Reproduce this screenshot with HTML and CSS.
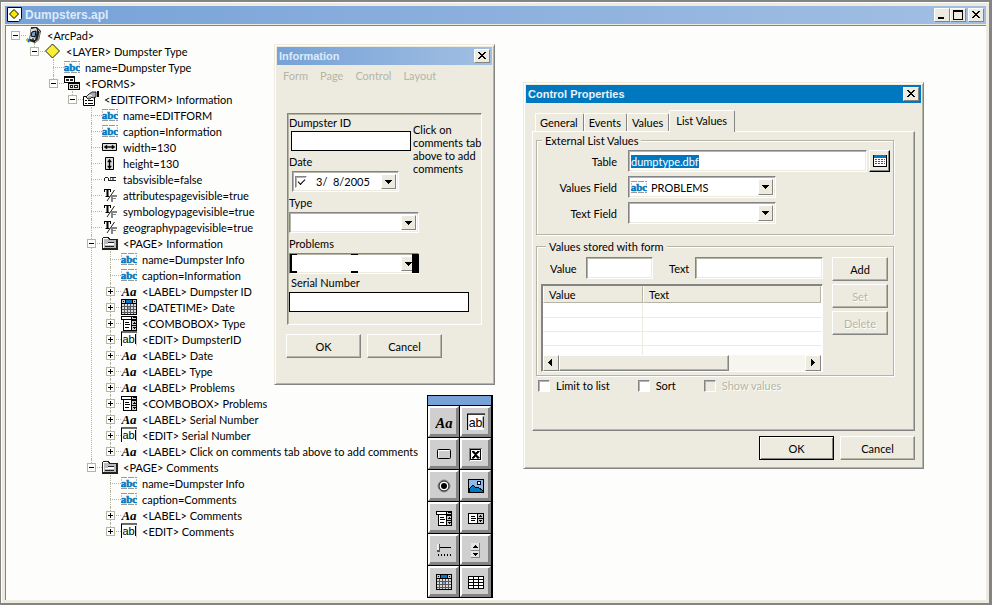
FILE: index.html
```
<!DOCTYPE html>
<html lang="en">
<head>
    <meta charset="UTF-8">
    <meta name="viewport" content="width=device-width, initial-scale=1.0">
    <title>Dumpsters.apl</title>
    <link rel="stylesheet" href="styles.css">
</head>
<body>
    <!-- icon set -->
    <svg class="sprite" aria-hidden="true">
        <symbol id="i-abc" viewBox="0 0 16 16">
            <path d="M0 2.500h16M0 13.500h16" stroke="#999" stroke-dasharray="6 1"/>
            <path d="M0 5h1M15 5h1M0 11h1" stroke="#848484"/>
            <text x="8" y="12" text-anchor="middle" font-family="Liberation Serif, serif" font-weight="bold" font-size="11" fill="#0078bf" stroke="#0078bf" stroke-width=".5">abc</text>
        </symbol>
        <symbol id="i-arcpad" viewBox="0 0 16 16">
            <path d="M5 0h6l4 4-2 9-4 3-6-2z" fill="#222"/>
            <path d="M5 2l5-1 1 2-2 10-5-1z" fill="#ddd"/>
            <path d="M6 5l4-1-1 6-4-1z" fill="#7ba2d8" stroke="#000"/>
            <path d="M12 3l2 2-2 8-3 2" fill="none" stroke="#aaa"/>
            <path d="M6 12h2" stroke="#000"/>
            <path d="M1 11l3 2-1 3-2-2z" fill="#0078bf"/>
            <path d="M0 12h2v2H0z" fill="#d9c000"/>
        </symbol>
        <symbol id="i-layer" viewBox="0 0 16 16">
            <path d="M7.500 1l7 7-7 7-7-7z" fill="#f8f032" stroke="#222"/>
        </symbol>
        <symbol id="i-forms" viewBox="0 0 16 16" shape-rendering="crispEdges">
            <path d="M0 1h11v7H0z"/><path d="M1 3h9v4H1z" fill="#fff"/>
            <path d="M2 4h3v2H2zM6 4h3v2H6z" fill="#222"/>
            <path d="M4 7h12v8H4z"/><path d="M5 9h10v5H5z" fill="#ddd"/>
            <path d="M6 10h3v3H6zM10 10h4v3h-4z" fill="#222"/>
            <path d="M7 11h1v1H7zM11 11h2v1h-2z" fill="#fff"/>
        </symbol>
        <symbol id="i-editform" viewBox="0 0 16 16">
            <path d="M.5 5.500h11v9H.5z" fill="#fff" stroke="#000"/>
            <path d="M2 9.500h2M5 9.500h5M2 12.500h2M5 12.500h5" stroke="#000"/>
            <path d="M3 6l3-3 3-2h4v5l-3 1-1-1-2 2H5z" fill="#aaa" stroke="#000" stroke-width=".8"/>
            <path d="M4 6l3-2 2 1" fill="none" stroke="#fff"/>
            <path d="M14 0h2v6h-2z"/>
        </symbol>
        <symbol id="i-width" viewBox="0 0 16 16">
            <path d="M.5 4.500h14v7H.5z" fill="#ddd" stroke="#000"/>
            <path d="M2 8l3-2v1.500h5V6l3 2-3 2V8.500H5V10z" stroke="#000" stroke-width=".4"/>
        </symbol>
        <symbol id="i-height" viewBox="0 0 16 16">
            <path d="M3.500 2.500h8v12h-8z" fill="#ddd" stroke="#000"/>
            <path d="M7.500 4l2 3H8v4h1.500l-2 3-2-3H7V7H5.500z" stroke="#000" stroke-width=".4"/>
        </symbol>
        <symbol id="i-tabs" viewBox="0 0 16 16" shape-rendering="crispEdges">
            <path d="M2 7h1v3H2zM3 6h3v1H3zM6 7h1v3H6zM8 6h5v1H8zM7 9h6v1H7z" fill="#222"/>
            <path d="M8 7h1v2H8zM10 7h2v2h-2z" fill="#848484"/>
            <path d="M13 6h1v1h-1zM13 9h1v1h-1z" fill="#222"/>
        </symbol>
        <symbol id="i-tf" viewBox="0 0 16 16">
            <path d="M2 2h7v3H8V3H6.500v6h1v1h-4V9h1V3H3v2H2z"/>
            <path d="M12.500 3L5 14" stroke="#222"/>
            <path d="M9 8h6v2h-4v1h3v1h-3v3H9z" fill="#848484"/>
        </symbol>
        <symbol id="i-page" viewBox="0 0 16 16" shape-rendering="crispEdges">
            <path d="M1 2h6l1 2h8v11H0V3z" fill="#222"/>
            <path d="M1 3h5l1 2h7v8H1z" fill="#bbb"/>
            <path d="M1 3h5v1H1zM1 4h1v9H1z" fill="#fff"/>
            <path d="M6 7h6v1H6zM3 11h9v1H3z" fill="#222"/>
            <path d="M6 8h6v1H6zM3 9h9v1H3z" fill="#fff"/>
        </symbol>
        <symbol id="i-label" viewBox="0 0 16 16">
            <text x="8" y="13" text-anchor="middle" font-family="Liberation Serif, serif" font-weight="bold" font-style="italic" font-size="13">Aa</text>
        </symbol>
        <symbol id="i-date" viewBox="0 0 16 16" shape-rendering="crispEdges">
            <path d="M0 0h16v16H0z"/>
            <path d="M1 1h3v3H1zM12 1h3v3h-3z" fill="#ccc"/>
            <path d="M5 1h6v3H5z" fill="#0078bf"/>
            <path d="M2 2h1v1H2zM13 2h1v1h-1z"/>
            <path d="M1 5h14v10H1z" fill="#ddd"/>
            <path d="M3 5h1v10H3zM6 5h1v10H6zM9 5h1v10H9zM12 5h1v10h-1z" fill="#555"/>
            <path d="M1 7h14v1H1zM1 10h14v1H1zM1 13h14v1H1z" fill="#555"/>
            <path d="M7 8h2v2H7z" fill="#7ba2d8"/>
        </symbol>
        <symbol id="i-combo" viewBox="0 0 16 16" shape-rendering="crispEdges">
            <path d="M0 1h16v4H0zM2 5h14v11H2z"/>
            <path d="M1 2h9v2H1zM3 5h7v10H3z" fill="#fff"/>
            <path d="M11 2h4v2h-4zM11 6h4v4h-4zM11 11h4v4h-4z" fill="#ccc"/>
            <path d="M4 7h4v1H4zM4 9h5v1H4zM4 12h4v1H4zM12 2h3v1h-3zM12 8h3v1h-3zM13 7h1v1h-1zM12 12h3v1h-3zM13 13h1v1h-1z"/>
        </symbol>
        <symbol id="i-edit" viewBox="0 0 16 16">
            <path d="M0 0h16v15H0z" fill="#ccc"/>
            <path d="M1 1.500h14V15H1z" fill="#fff"/>
            <path d="M0 1h16M.5 1v14" stroke="#000" fill="none"/>
            <text x="1.500" y="12" font-family="Liberation Sans, sans-serif" font-size="11">ab</text>
            <path d="M14.500 3v10" stroke="#000"/>
        </symbol>
        <symbol id="i-button" viewBox="0 0 16 16">
            <rect x="1.500" y="3.500" width="13" height="9" rx="1" fill="#ccc" stroke="#000"/>
            <path d="M2.500 11.500V4.500h11" stroke="#fff" fill="none"/>
        </symbol>
        <symbol id="i-check" viewBox="0 0 16 16" shape-rendering="crispEdges">
            <path d="M1 2h13v13H1z" fill="#fff"/><path d="M1 2h13v1H2v12H1z" fill="#848484"/>
            <path d="M2 3h11v11H2z"/><path d="M3 4h9v9H3z" fill="#fff"/>
            <path d="M4 5h2v1h1v1h1V6h1V5h2v1h-1v1H9v1H8v1h1v1h1v1h1v1H9v-1H8v-1H7v1H6v1H4v-1h1v-1h1V9h1V8H6V7H5V6H4z" stroke="#000" stroke-width=".6"/>
        </symbol>
        <symbol id="i-radio" viewBox="0 0 16 16">
            <circle cx="8" cy="8" r="6" fill="#fff" stroke="#848484"/>
            <circle cx="8" cy="8" r="5" fill="#fff" stroke="#000"/>
            <circle cx="8" cy="8" r="3"/>
        </symbol>
        <symbol id="i-image" viewBox="0 0 16 16" shape-rendering="crispEdges">
            <path d="M.5 1.500h15v13H.5z" fill="#8fb8ea" stroke="#000"/>
            <path d="M1 14v-3l4-4 3 3 2-1 5 4v1z" fill="#0078bf" stroke="#000"/>
            <circle cx="11" cy="5" r="2" fill="#fff" stroke="#000"/>
        </symbol>
        <symbol id="i-list" viewBox="0 0 16 16" shape-rendering="crispEdges">
            <path d="M0 3h16v11H0z"/><path d="M1 4h8v9H1z" fill="#fff"/>
            <path d="M10 4h5v4h-5zM10 9h5v4h-5z" fill="#ccc"/>
            <path d="M3 6h4v1H3zM3 8h5v1H3zM3 10h4v1H3zM12 5h1v1h-1zM11 6h3v1h-3zM11 10h3v1h-3zM12 11h1v1h-1z"/>
        </symbol>
        <symbol id="i-slider" viewBox="0 0 16 16" shape-rendering="crispEdges">
            <path d="M4 5h11v1H4zM3 8h1v2H3z"/>
            <path d="M1 2h3v8H1z" fill="#555"/><path d="M1 2h2v6H1z" fill="#eee"/>
            <path d="M2 12h1v2H2zM5 12h1v2H5zM8 12h1v2H8zM11 12h1v2h-1zM14 12h1v2h-1z"/>
        </symbol>
        <symbol id="i-spin" viewBox="0 0 16 16" shape-rendering="crispEdges">
            <path d="M3 1h9v15H3z" fill="#848484"/>
            <path d="M3 1h8v7H3zM3 9h8v6H3z" fill="#e4e4e4"/>
            <path d="M7 3h1v1H7zM6 4h3v1H6zM5 5h5v1H5zM5 11h5v1H5zM6 12h3v1H6zM7 13h1v1H7z"/>
        </symbol>
        <symbol id="i-table" viewBox="0 0 16 16" shape-rendering="crispEdges">
            <path d="M0 2h16v13H0z"/>
            <path d="M1 3h4v2H1zM6 3h4v2H6zM11 3h4v2h-4zM1 6h4v2H1zM6 6h4v2H6zM11 6h4v2h-4zM1 9h4v2H1zM6 9h4v2H6zM11 9h4v2h-4zM1 12h4v2H1zM6 12h4v2H6zM11 12h4v2h-4z" fill="#fff"/>
        </symbol>
        <symbol id="i-browse" viewBox="0 0 16 16" shape-rendering="crispEdges">
            <path d="M1 2h14v12H1z"/><path d="M2 2h12v3H2z" fill="#0078bf"/>
            <path d="M2 5h12v8H2z" fill="#fff"/>
            <path d="M3 6h2v1H3zM6 6h2v1H6zM9 6h2v1H9zM12 6h1v1h-1zM3 8h2v1H3zM6 8h2v1H6zM9 8h2v1H9zM12 8h1v1h-1zM3 10h2v1H3zM6 10h2v1H6zM9 10h2v1H9zM12 10h1v1h-1z" fill="#555"/>
        </symbol>
        <symbol id="i-app" viewBox="0 0 16 16">
            <path d="M.5 .5h14v11l-3 3H.5z" fill="#fff" stroke="#000"/>
            <path d="M7 2.500l4.500 4.500L7 11.500 2.500 7z" fill="#f8e800" stroke="#000"/>
            <path d="M12 15v-3h3z" fill="#0078bf"/>
        </symbol>
        <symbol id="i-close" viewBox="0 0 10 10" shape-rendering="crispEdges">
            <path d="M1 1h2v1h1v1h2V2h1V1h2v1H8v1H7v1H6v1h1v1h1v1h1v1H7V7H6V6H4v1H3v1H1V7h1V6h1V5h1V4H3V3H2V2H1z"/>
        </symbol>
        <symbol id="i-min" viewBox="0 0 10 10"><path d="M1 7h6v2H1z"/></symbol>
        <symbol id="i-max" viewBox="0 0 10 10"><path d="M0 0h10v10H0z M1 2v7h8V2z" fill-rule="evenodd"/></symbol>
        <symbol id="i-down" viewBox="0 0 8 8" shape-rendering="crispEdges"><path d="M0 2h7v1H0zM1 3h5v1H1zM2 4h3v1H2zM3 5h1v1H3z"/></symbol>
        <symbol id="i-left" viewBox="0 0 8 8" shape-rendering="crispEdges"><path d="M5 0v7H4V6H3V5H2V4H1V3h1V2h1V1h1V0z"/></symbol>
        <symbol id="i-right" viewBox="0 0 8 8" shape-rendering="crispEdges"><path d="M2 0v7h1V6h1V5h1V4h1V3H5V2H4V1H3V0z"/></symbol>
    </svg>

    <main class="window">
        <header class="title-bar">
            <svg class="icon"><use href="#i-app"/></svg>
            <h1>Dumpsters.apl</h1>
            <div class="window-buttons">
                <button class="cap" aria-label="Minimize"><svg><use href="#i-min"/></svg></button>
                <button class="cap" aria-label="Maximize"><svg><use href="#i-max"/></svg></button>
                <button class="cap cap-close" aria-label="Close"><svg><use href="#i-close"/></svg></button>
            </div>
        </header>

        <div class="client">
            <ul class="tree">
                <li>
                    <div class="row"><button class="toggle open" aria-label="Collapse"></button><svg class="icon"><use href="#i-arcpad"/></svg>&lt;ArcPad&gt;</div>
                    <ul>
                        <li>
                            <div class="row"><button class="toggle open" aria-label="Collapse"></button><svg class="icon"><use href="#i-layer"/></svg>&lt;LAYER&gt; Dumpster Type</div>
                            <ul>
                                <li><div class="row"><svg class="icon"><use href="#i-abc"/></svg>name=Dumpster Type</div></li>
                                <li>
                                    <div class="row"><button class="toggle open" aria-label="Collapse"></button><svg class="icon"><use href="#i-forms"/></svg>&lt;FORMS&gt;</div>
                                    <ul>
                                        <li>
                                            <div class="row"><button class="toggle open" aria-label="Collapse"></button><svg class="icon"><use href="#i-editform"/></svg>&lt;EDITFORM&gt; Information</div>
                                            <ul>
                                                <li><div class="row"><svg class="icon"><use href="#i-abc"/></svg>name=EDITFORM</div></li>
                                                <li><div class="row"><svg class="icon"><use href="#i-abc"/></svg>caption=Information</div></li>
                                                <li><div class="row"><svg class="icon"><use href="#i-width"/></svg>width=130</div></li>
                                                <li><div class="row"><svg class="icon"><use href="#i-height"/></svg>height=130</div></li>
                                                <li><div class="row"><svg class="icon"><use href="#i-tabs"/></svg>tabsvisible=false</div></li>
                                                <li><div class="row"><svg class="icon"><use href="#i-tf"/></svg>attributespagevisible=true</div></li>
                                                <li><div class="row"><svg class="icon"><use href="#i-tf"/></svg>symbologypagevisible=true</div></li>
                                                <li><div class="row"><svg class="icon"><use href="#i-tf"/></svg>geographypagevisible=true</div></li>
                                                <li>
                                                    <div class="row"><button class="toggle open" aria-label="Collapse"></button><svg class="icon"><use href="#i-page"/></svg>&lt;PAGE&gt; Information</div>
                                                    <ul>
                                                        <li><div class="row"><svg class="icon"><use href="#i-abc"/></svg>name=Dumpster Info</div></li>
                                                        <li><div class="row"><svg class="icon"><use href="#i-abc"/></svg>caption=Information</div></li>
                                                        <li><div class="row"><button class="toggle" aria-label="Expand"></button><svg class="icon"><use href="#i-label"/></svg>&lt;LABEL&gt; Dumpster ID</div></li>
                                                        <li><div class="row"><button class="toggle" aria-label="Expand"></button><svg class="icon"><use href="#i-date"/></svg>&lt;DATETIME&gt; Date</div></li>
                                                        <li><div class="row"><button class="toggle" aria-label="Expand"></button><svg class="icon"><use href="#i-combo"/></svg>&lt;COMBOBOX&gt; Type</div></li>
                                                        <li><div class="row"><button class="toggle" aria-label="Expand"></button><svg class="icon"><use href="#i-edit"/></svg>&lt;EDIT&gt; DumpsterID</div></li>
                                                        <li><div class="row"><button class="toggle" aria-label="Expand"></button><svg class="icon"><use href="#i-label"/></svg>&lt;LABEL&gt; Date</div></li>
                                                        <li><div class="row"><button class="toggle" aria-label="Expand"></button><svg class="icon"><use href="#i-label"/></svg>&lt;LABEL&gt; Type</div></li>
                                                        <li><div class="row"><button class="toggle" aria-label="Expand"></button><svg class="icon"><use href="#i-label"/></svg>&lt;LABEL&gt; Problems</div></li>
                                                        <li><div class="row"><button class="toggle" aria-label="Expand"></button><svg class="icon"><use href="#i-combo"/></svg>&lt;COMBOBOX&gt; Problems</div></li>
                                                        <li><div class="row"><button class="toggle" aria-label="Expand"></button><svg class="icon"><use href="#i-label"/></svg>&lt;LABEL&gt; Serial Number</div></li>
                                                        <li><div class="row"><button class="toggle" aria-label="Expand"></button><svg class="icon"><use href="#i-edit"/></svg>&lt;EDIT&gt; Serial Number</div></li>
                                                        <li><div class="row"><button class="toggle" aria-label="Expand"></button><svg class="icon"><use href="#i-label"/></svg>&lt;LABEL&gt; Click on comments tab above to add comments</div></li>
                                                    </ul>
                                                </li>
                                                <li>
                                                    <div class="row"><button class="toggle open" aria-label="Collapse"></button><svg class="icon"><use href="#i-page"/></svg>&lt;PAGE&gt; Comments</div>
                                                    <ul>
                                                        <li><div class="row"><svg class="icon"><use href="#i-abc"/></svg>name=Dumpster Info</div></li>
                                                        <li><div class="row"><svg class="icon"><use href="#i-abc"/></svg>caption=Comments</div></li>
                                                        <li><div class="row"><button class="toggle" aria-label="Expand"></button><svg class="icon"><use href="#i-label"/></svg>&lt;LABEL&gt; Comments</div></li>
                                                        <li><div class="row"><button class="toggle" aria-label="Expand"></button><svg class="icon"><use href="#i-edit"/></svg>&lt;EDIT&gt; Comments</div></li>
                                                    </ul>
                                                </li>
                                            </ul>
                                        </li>
                                    </ul>
                                </li>
                            </ul>
                        </li>
                    </ul>
                </li>
            </ul>
        </div>
    </main>

    <!-- form preview -->
    <section class="dialog info-dialog">
        <header class="dialog-title inactive">
            <h2>Information</h2>
            <button class="cap" aria-label="Close"><svg><use href="#i-close"/></svg></button>
        </header>
        <nav class="menu">
            <button disabled>Form</button>
            <button disabled>Page</button>
            <button disabled>Control</button>
            <button disabled>Layout</button>
        </nav>
        <div class="form-page">
            <div class="form-top">
                <div class="form-fields">
                    <label for="dumpsterId">Dumpster ID</label>
                    <input type="text" class="flat" id="dumpsterId">
                    <label for="date">Date</label>
                    <div class="combo date-picker">
                        <input type="checkbox" checked aria-label="Use date">
                        <input type="text" id="date" value="3/  8/2005">
                        <button class="drop" aria-label="Open calendar"><svg><use href="#i-down"/></svg></button>
                    </div>
                    <label for="type">Type</label>
                    <div class="combo">
                        <select id="type"><option></option></select>
                        <span class="drop"><svg><use href="#i-down"/></svg></span>
                    </div>
                    <label for="problems">Problems</label>
                    <div class="combo selected">
                        <select id="problems"><option></option></select>
                        <span class="drop"><svg><use href="#i-down"/></svg></span>
                        <i class="handle left"></i>
                        <i class="handle middle"></i>
                        <i class="handle right"></i>
                    </div>
                </div>
                <p class="note">Click on comments tab above to add comments</p>
            </div>
            <label class="serial-label" for="serial">Serial Number</label>
            <input type="text" class="flat serial" id="serial">
        </div>
        <div class="buttons">
            <button class="btn">OK</button>
            <button class="btn">Cancel</button>
        </div>
    </section>

    <!-- control toolbox -->
    <section class="toolbox" aria-label="Toolbox">
        <div class="toolbox-title"></div>
        <button class="tool" aria-label="Label"><svg class="medium"><use href="#i-label"/></svg></button>
        <button class="tool" aria-label="Edit"><svg class="medium"><use href="#i-edit"/></svg></button>
        <button class="tool" aria-label="Button"><svg><use href="#i-button"/></svg></button>
        <button class="tool" aria-label="Check box"><svg><use href="#i-check"/></svg></button>
        <button class="tool" aria-label="Radio button"><svg><use href="#i-radio"/></svg></button>
        <button class="tool" aria-label="Image"><svg><use href="#i-image"/></svg></button>
        <button class="tool" aria-label="Combo box"><svg><use href="#i-combo"/></svg></button>
        <button class="tool" aria-label="List box"><svg><use href="#i-list"/></svg></button>
        <button class="tool" aria-label="Slider"><svg><use href="#i-slider"/></svg></button>
        <button class="tool" aria-label="Up down"><svg><use href="#i-spin"/></svg></button>
        <button class="tool" aria-label="Date time"><svg><use href="#i-date"/></svg></button>
        <button class="tool" aria-label="Table"><svg><use href="#i-table"/></svg></button>
    </section>

    <!-- control properties -->
    <section class="dialog props-dialog">
        <header class="dialog-title">
            <h2>Control Properties</h2>
            <button class="cap" aria-label="Close"><svg><use href="#i-close"/></svg></button>
        </header>
        <div class="tabs" role="tablist">
            <button class="tab" role="tab">General</button>
            <button class="tab" role="tab">Events</button>
            <button class="tab" role="tab">Values</button>
            <button class="tab active" role="tab" aria-selected="true">List Values</button>
        </div>
        <div class="tab-panel">
            <fieldset>
                <legend>External List Values</legend>
                <div class="external">
                    <label for="table">Table</label>
                    <div class="table-field">
                        <div class="sunken"><input type="text" id="table" value="dumptype.dbf"></div>
                        <button class="browse" aria-label="Browse"><svg><use href="#i-browse"/></svg></button>
                    </div>
                    <label for="valuesField">Values Field</label>
                    <div class="combo">
                        <svg class="icon"><use href="#i-abc"/></svg>
                        <select id="valuesField"><option>PROBLEMS</option></select>
                        <span class="drop"><svg><use href="#i-down"/></svg></span>
                    </div>
                    <label for="textField">Text Field</label>
                    <div class="combo">
                        <select id="textField"><option></option></select>
                        <span class="drop"><svg><use href="#i-down"/></svg></span>
                    </div>
                </div>
            </fieldset>
            <fieldset>
                <legend>Values stored with form</legend>
                <div class="stored">
                    <div class="stored-main">
                        <div class="stored-inputs">
                            <label for="value">Value</label>
                            <div class="sunken value-input"><input type="text" id="value"></div>
                            <label for="text">Text</label>
                            <div class="sunken"><input type="text" id="text"></div>
                        </div>
                        <div class="list">
                            <table>
                                <thead><tr><th>Value</th><th>Text</th></tr></thead>
                                <tbody>
                                    <tr><td></td><td></td></tr>
                                    <tr><td></td><td></td></tr>
                                    <tr><td></td><td></td></tr>
                                    <tr><td></td><td></td></tr>
                                </tbody>
                            </table>
                            <div class="scrollbar">
                                <button class="arrow" aria-label="Scroll left"><svg><use href="#i-left"/></svg></button>
                                <div class="thumb"></div>
                                <button class="arrow" aria-label="Scroll right"><svg><use href="#i-right"/></svg></button>
                            </div>
                        </div>
                    </div>
                    <div class="stored-buttons">
                        <button class="btn">Add</button>
                        <button class="btn" disabled>Set</button>
                        <button class="btn" disabled>Delete</button>
                    </div>
                </div>
            </fieldset>
            <div class="options">
                <label><input type="checkbox">Limit to list</label>
                <label><input type="checkbox">Sort</label>
                <label class="disabled"><input type="checkbox" disabled>Show values</label>
            </div>
        </div>
        <div class="buttons">
            <button class="btn default">OK</button>
            <button class="btn">Cancel</button>
        </div>
    </section>

    <script>
        // the table name starts out selected
        document.getElementById("table").select();
    </script>
</body>
</html>
```
FILE: styles.css
```
* {
    box-sizing: border-box;
}
body {
    margin: 0;
    background: #fdfdfb;
    color: #000;
    font-family: Lato, "Liberation Sans", sans-serif;
    font-size: 11px;
    line-height: 13px;
}
button, input, select {
    font: inherit;
    color: inherit;
    margin: 0;
    padding: 0;
    border: none;
    border-radius: 0;
    outline: none;
}
h1, h2, p {
    margin: 0;
    font-size: 11px;
}
h1, h2 {
    font-family: "Liberation Sans", Arial, sans-serif;
}
ul {
    list-style: none;
    margin: 0;
    padding: 0;
}
.sprite {
    display: none;
}
.icon {
    width: 16px;
    height: 16px;
    flex: none;
}

/* main window */
.window {
    display: flex;
    flex-direction: column;
    min-height: 100vh;
    border: 2px solid #848484;
    border-left-width: 1px;
    border-right-width: 3px;
    background: #edebe0;
    padding: 4px 3px 3px 4px;
    box-shadow: inset 1px 1px 0 #fff;
}
.title-bar {
    display: flex;
    align-items: center;
    height: 18px;
    padding: 0 2px;
    background: linear-gradient(90deg, #76a2d8, #a2bfe3);
    color: #dceafa;
}
.title-bar h1 {
    flex: 1;
    font-size: 12px;
    padding-left: 2px;
}
.window-buttons {
    display: flex;
}
.cap {
    display: flex;
    align-items: center;
    justify-content: center;
    width: 16px;
    height: 14px;
    background: #edebe0;
    border: 1px solid;
    border-color: #fff #848484 #848484 #fff;
    color: #000;
}
.cap svg {
    width: 10px;
    height: 10px;
}
.cap-close {
    margin-left: 2px;
}
.client {
    flex: 1;
    margin-top: 1px;
    padding: 1px 0 0 5px;
    background: #fdfdfb;
    border: 1px solid #848484;
    border-width: 1px 0 0 1px;
}

/* tree */
.tree ul {
    padding-left: 19px;
}
.tree li {
    position: relative;
}
.tree li::before {
    content: "";
    position: absolute;
    left: 4px;
    top: 0;
    bottom: 0;
    border-left: 1px dotted #b5b5a5;
}
.tree li:last-child::before {
    bottom: auto;
    height: 8px;
}
.tree > li::before {
    display: none;
}
.row {
    position: relative;
    display: flex;
    align-items: center;
    height: 16px;
    white-space: nowrap;
}
.row::before {
    content: "";
    position: absolute;
    left: 4px;
    top: 8px;
    width: 11px;
    border-top: 1px dotted #b5b5a5;
}
.row .icon {
    margin: 0 5px 0 15px;
}
.toggle {
    position: relative;
    width: 9px;
    height: 9px;
    border: 1px solid #b5b5a5;
    background:
        linear-gradient(#000, #000) center / 5px 1px no-repeat,
        linear-gradient(#000, #000) center / 1px 5px no-repeat,
        #fff;
}
.toggle.open {
    background: linear-gradient(#000, #000) center / 5px 1px no-repeat, #fff;
}
.toggle + .icon {
    margin-left: 6px;
}

/* dialogs */
.dialog {
    position: absolute;
    background: #edebe0;
    border: 1px solid;
    border-color: #edebe0 #848484 #848484 #edebe0;
    box-shadow: inset 1px 1px 0 #fff, inset -1px -1px 0 #b5b5a5;
    padding: 2px;
}
.info-dialog {
    left: 274px;
    top: 44px;
    width: 221px;
}
.props-dialog {
    left: 523px;
    top: 82px;
    width: 401px;
}
.dialog-title {
    display: flex;
    align-items: center;
    justify-content: space-between;
    height: 18px;
    padding: 0 2px;
    background: #0078bf;
    color: #e8f2fa;
}
.dialog-title.inactive {
    background: linear-gradient(90deg, #76a2d8, #a2bfe3);
    color: #dceafa;
}
.menu {
    display: flex;
    gap: 12px;
    padding: 4px 6px;
}
.menu button {
    background: none;
    color: #b5b5a5;
}
.form-page {
    margin: 27px 10px 0;
    height: 212px;
    border: 1px solid;
    border-color: #848484 #fff #fff #848484;
    box-shadow: inset 1px 1px 0 #b5b5a5;
    padding: 2px 0 0 1px;
}
.form-top {
    display: flex;
}
.form-fields {
    display: flex;
    flex-direction: column;
    flex: none;
    width: 130px;
}
.form-fields label {
    padding: 0 0 3px;
    margin-top: 4px;
}
.form-fields label:first-child {
    margin-top: 0;
    padding-bottom: 2px;
}
.flat {
    height: 20px;
    background: #fff;
    border: 1px solid #000;
}
.form-fields .flat {
    width: 120px;
    margin-left: 2px;
}
.note {
    flex: none;
    width: 72px;
    margin: 7px 0 0 -6px;
    font-weight: normal;
}
.serial-label {
    display: block;
    margin: 2px 0 3px 2px;
}
.serial {
    display: block;
    width: 180px;
}

/* fields */
.sunken, .combo {
    display: flex;
    align-items: center;
    height: 22px;
    background: #fff;
    border: 1px solid;
    border-color: #848484 #fff #fff #848484;
    box-shadow: inset 1px 1px 0 #b5b5a5, inset -1px -1px 0 #edebe0;
    padding: 2px;
}
.sunken input {
    width: 100%;
    min-width: 0;
    background: none;
}
.sunken input::selection {
    background: #0078bf;
    color: #fff;
}
.form-fields .combo {
    height: 21px;
}
.combo select {
    flex: 1;
    min-width: 0;
    height: 100%;
    appearance: none;
    background: none;
    padding-left: 4px;
}
.drop {
    display: flex;
    align-items: center;
    justify-content: center;
    width: 15px;
    height: 100%;
    background: #edebe0;
    border: 1px solid;
    border-color: #fff #848484 #848484 #fff;
}
.drop svg, .arrow svg {
    width: 8px;
    height: 8px;
}
.date-picker {
    width: 107px;
    margin-left: 3px;
    white-space: pre;
}
.date-picker input[type="text"] {
    flex: 1;
    min-width: 0;
    background: none;
    padding-left: 9px;
}
input[type="checkbox"] {
    appearance: none;
    flex: none;
    display: grid;
    place-content: center;
    width: 12px;
    height: 12px;
    background: #fff;
    border: 1px solid;
    border-color: #848484 #fff #fff #848484;
    box-shadow: inset 1px 1px 0 #b5b5a5;
}
input[type="checkbox"]:checked::before {
    content: "";
    width: 6px;
    height: 3px;
    border: solid #000;
    border-width: 0 0 1px 1px;
    transform: rotate(-45deg);
    margin-bottom: 2px;
}
input[type="checkbox"]:disabled {
    background: #edebe0;
}

/* selection handles over the control being edited */
.selected {
    position: relative;
}
.handle {
    position: absolute;
    top: 0;
    bottom: 0;
    border: solid #000;
    border-width: 0;
}
/* left and middle are drawn as corner marks, the bars only touch the edges */
.handle.left {
    left: 0;
    width: 7px;
    border-width: 1px 0 2px 2px;
}
.handle.middle {
    left: 61px;
    width: 7px;
    border-width: 1px 0 2px;
}
.handle.right {
    right: -1px;
    width: 7px;
    background: #000;
}

/* push buttons */
.buttons {
    display: flex;
    gap: 6px;
}
.info-dialog .buttons {
    padding: 9px 9px 24px;
}
.props-dialog .buttons {
    justify-content: flex-end;
    padding: 5px 6px 6px;
}
.btn {
    width: 75px;
    height: 24px;
    background: #edebe0;
    border: 1px solid;
    border-color: #fff #848484 #848484 #fff;
    box-shadow: inset -1px -1px 0 #b5b5a5;
}
.btn:disabled, .disabled {
    color: #b5b5a5;
    text-shadow: 1px 1px 0 #fff;
}
.btn.default {
    border-color: #000;
    box-shadow: inset 1px 1px 0 #fff, inset -1px -1px 0 #848484;
}

/* tabs */
.tabs {
    display: flex;
    align-items: flex-end;
    padding: 7px 9px 0;
}
.tab {
    height: 18px;
    padding: 0 5px 0 4px;
    background: #edebe0;
    border: 1px solid;
    border-color: #fff #848484 transparent #fff;
    border-bottom: none;
    border-radius: 2px 2px 0 0;
}
.tab.active {
    height: 22px;
    padding: 0 7px 3px 6px;
    margin-bottom: -1px;
    z-index: 1;
}
.tab-panel {
    margin: 0 6px;
    border: 1px solid;
    border-color: #fff #848484 #848484 #fff;
    box-shadow: inset -1px -1px 0 #b5b5a5;
    height: 300px;
    padding: 2px 20px 0 3px;
}
fieldset {
    margin: 0;
    border: 1px solid #b5b5a5;
    box-shadow: 1px 1px 0 #fff, inset 1px 1px 0 #fff;
    min-width: 0;
}
legend {
    margin-left: 5px;
    padding: 0 3px;
    background: #edebe0;
}
fieldset:first-child {
    padding: 3px 3px 10px 0;
}
.external {
    display: grid;
    grid-template-columns: 80px 1fr;
    gap: 4px 11px;
    align-items: center;
}
.external label {
    text-align: right;
}
.external .combo {
    width: 148px;
}
.table-field {
    display: flex;
    gap: 2px;
}
.table-field .sunken {
    flex: 1;
}
.browse {
    display: flex;
    align-items: center;
    justify-content: center;
    width: 21px;
    height: 22px;
    background: #edebe0;
    border: 1px solid;
    border-color: #fff #000 #000 #fff;
    box-shadow: inset -1px -1px 0 #848484;
}
.browse svg {
    width: 16px;
    height: 16px;
}
fieldset + fieldset {
    margin-top: 5px;
    padding: 4px 5px 3px 4px;
}
.stored {
    display: flex;
    gap: 9px;
}
.stored-main {
    flex: 1;
}
.stored-inputs {
    display: flex;
    align-items: center;
    padding-left: 9px;
}
.stored-inputs label {
    width: 26px;
    flex: none;
}
.stored-inputs .sunken {
    flex: 1;
}
.stored-inputs .value-input {
    flex: none;
    width: 67px;
    margin: 0 16px 0 10px;
}
.list {
    margin-top: 5px;
    background: #fff;
    border: 1px solid;
    border-color: #848484 #fff #fff #848484;
    box-shadow: inset 1px 1px 0 #848484;
    padding: 1px 1px 0;
}
.list table {
    width: 100%;
    table-layout: fixed;
    border-collapse: separate;
    border-spacing: 0;
}
.list th {
    height: 17px;
    padding: 0 0 0 5px;
    text-align: left;
    font-weight: normal;
    background: #edebe0;
    border: 1px solid;
    border-color: #edebe0 #b5b5a5 #b5b5a5 #fff;
}
.list th:first-child {
    width: 100px;
}
.list td {
    height: 14px;
    padding: 0;
    border-bottom: 1px solid #edebe0;
}
.list td:first-child {
    border-right: 1px solid #edebe0;
}
.list tbody tr:first-child td {
    height: 15px;
}
.list tbody tr:last-child td {
    height: 9px;
    border-bottom: none;
}
.scrollbar {
    display: flex;
    justify-content: space-between;
    height: 16px;
    background: #f6f5ef;
}
.arrow {
    display: flex;
    align-items: center;
    justify-content: center;
    width: 16px;
    background: #edebe0;
    border: 1px solid;
    border-color: #fff #848484 #848484 #fff;
}
.thumb {
    width: 61%;
    margin-right: auto;
    background: #edebe0;
    border: 1px solid;
    border-color: #fff #848484 #848484 #fff;
    box-shadow: inset -1px -1px 0 #b5b5a5;
}
.stored-buttons {
    display: flex;
    flex-direction: column;
    gap: 3px;
}
.stored-buttons .btn {
    width: 56px;
}
.options {
    display: flex;
    margin-top: 3px;
    padding-left: 2px;
}
.options label {
    display: flex;
    align-items: center;
    gap: 6px;
    margin-right: 28px;
}

/* toolbox */
.toolbox {
    position: absolute;
    left: 427px;
    top: 395px;
    display: grid;
    grid-template-columns: 31px 31px;
    gap: 1px;
    padding: 1px;
    background: #000;
    border-right: 1px solid #000;
}
.toolbox-title {
    grid-column: 1 / -1;
    height: 9px;
    background: #76a2d8;
}
.tool {
    display: flex;
    align-items: center;
    justify-content: center;
    height: 31px;
    background: #cfcfcf;
    border: 2px solid;
    border-color: #fff #848484 #848484 #fff;
    box-shadow: inset -1px -1px 0 #848484;
}
.tool svg {
    width: 16px;
    height: 16px;
}
.tool svg.medium {
    width: 18px;
    height: 18px;
}
```
